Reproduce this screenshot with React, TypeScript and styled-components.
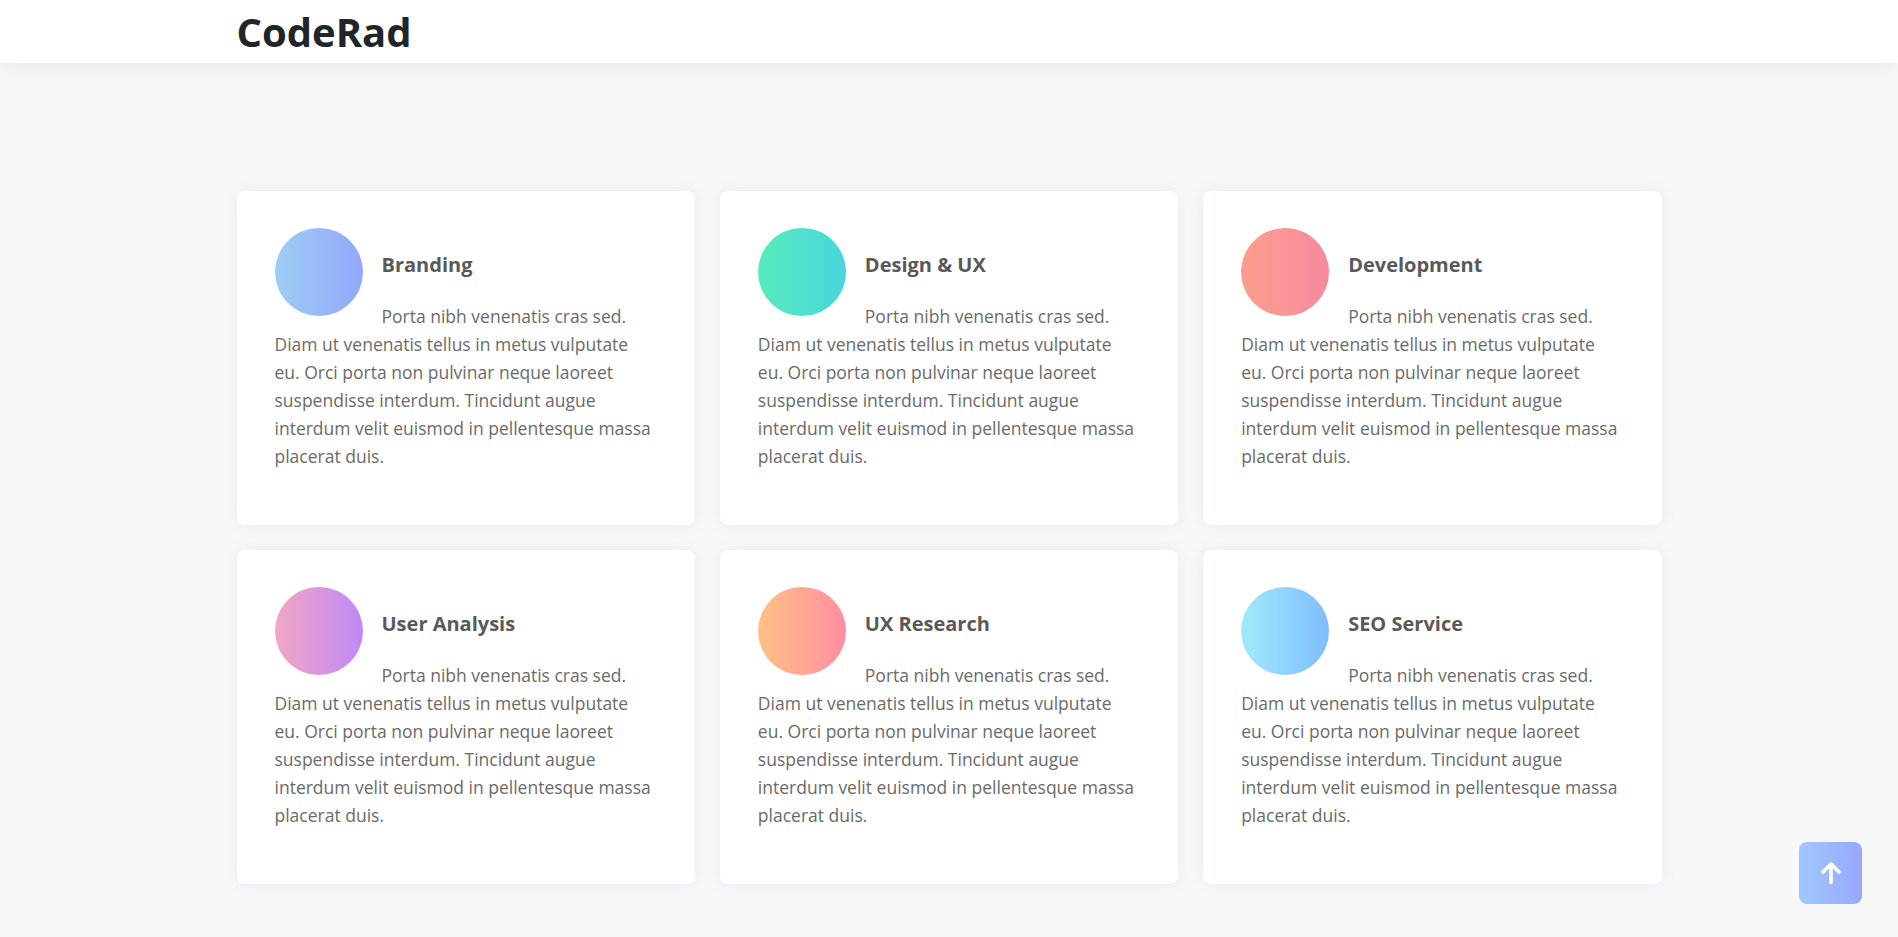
import React from "react";
import styled, { createGlobalStyle } from "styled-components";

const GlobalStyle = createGlobalStyle`
  * { box-sizing: border-box; }
  html, body { margin: 0; padding: 0; }
  body {
    background: #f7f8fa;
    font-family: "Open Sans", "Noto Sans", sans-serif;
    color: #666;
  }
`;

const Header = styled.header`
  height: 63px;
  background: #fff;
  box-shadow: 0 2px 18px rgba(30, 40, 70, 0.09);
  position: relative;
  z-index: 2;
`;

const Container = styled.div`
  width: 1425px;
  margin: 0 auto;
`;

const Logo = styled.h1`
  margin: 0;
  font-size: 40px;
  line-height: 63px;
  font-weight: 700;
  color: #212529;
`;

const Main = styled.main`
  padding: 128px 0 53px;
`;

const Grid = styled.div`
  display: grid;
  grid-template-columns: repeat(3, 1fr);
  gap: 25px;
`;

const Card = styled.div`
  background: #fff;
  border-radius: 8px;
  padding: 37px 38px 54px;
  box-shadow: 0 0 18px rgba(30, 40, 80, 0.06);
  min-height: 334px;
`;

const Circle = styled.div<{ $from: string; $to: string }>`
  float: left;
  width: 88px;
  height: 88px;
  border-radius: 50%;
  margin-right: 19px;
  background: linear-gradient(to right, ${(p) => p.$from}, ${(p) => p.$to});
`;

const Title = styled.h3`
  margin: 25px 0 25px;
  font-size: 20px;
  line-height: 24px;
  font-weight: 700;
  color: #595959;
`;

const Text = styled.p`
  margin: 0;
  font-size: 17.5px;
  line-height: 28px;
  color: #6a6a6a;
`;

const TopButton = styled.button`
  position: fixed;
  right: 36px;
  bottom: 33px;
  width: 63px;
  height: 62px;
  border: none;
  border-radius: 8px;
  background: linear-gradient(to right, #a1c8fd, #97a7fc);
  display: flex;
  align-items: center;
  justify-content: center;
  cursor: pointer;
  padding: 0;
`;

const body =
  "Porta nibh venenatis cras sed. Diam ut venenatis tellus in metus vulputate eu. Orci porta non pulvinar neque laoreet suspendisse interdum. Tincidunt augue interdum velit euismod in pellentesque massa placerat duis.";

const services = [
  { title: "Branding", from: "#9fcdf5", to: "#93a7fc" },
  { title: "Design & UX", from: "#56ecbb", to: "#48d6de" },
  { title: "Development", from: "#fc9e8d", to: "#f68a9f" },
  { title: "User Analysis", from: "#f2a7c4", to: "#c088f7" },
  { title: "UX Research", from: "#ffc184", to: "#ff8ea2" },
  { title: "SEO Service", from: "#a1eafd", to: "#7fbdfe" },
];

export default function App() {
  return (
    <>
      <GlobalStyle />
      <Header>
        <Container>
          <Logo>CodeRad</Logo>
        </Container>
      </Header>
      <Main>
        <Container>
          <Grid>
            {services.map((s) => (
              <Card key={s.title}>
                <Circle $from={s.from} $to={s.to} />
                <Title>{s.title}</Title>
                <Text>{body}</Text>
              </Card>
            ))}
          </Grid>
        </Container>
      </Main>
      <TopButton aria-label="Back to top">
        <svg width="22" height="24" viewBox="0 0 22 24" fill="none">
          <path
            d="M11 21.5V3.5M3 11l8-8 8 8"
            stroke="#fff"
            strokeWidth="3.6"
            strokeLinecap="round"
            strokeLinejoin="round"
          />
        </svg>
      </TopButton>
    </>
  );
}
